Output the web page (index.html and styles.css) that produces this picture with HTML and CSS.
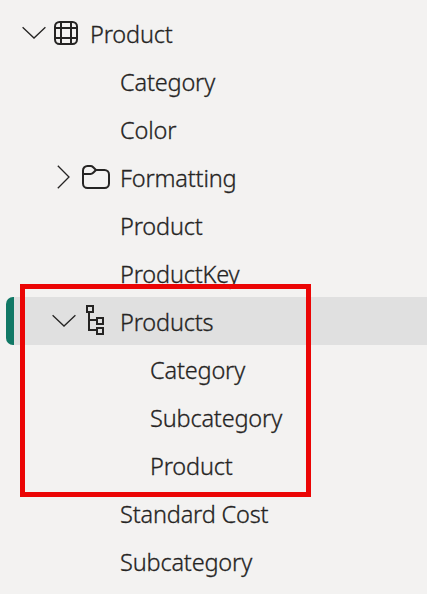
FILE: index.html
```
<!DOCTYPE html>
<html lang="en">
<head>
<meta charset="utf-8">
<title>Data</title>
<link rel="stylesheet" href="styles.css">
</head>
<body>
<main class="tree">
  <div class="row root">
    <svg class="chevron" viewBox="0 0 24 48"><path d="M.6 18.2 12 29 23.4 18.2"/></svg>
    <svg class="icon" viewBox="0 0 30 48"><rect x="3" y="13" width="22" height="22" rx="4.5"/><path d="M9 13V35M19 13V35M3 19H25M3 29H25"/></svg>
    <span class="label">Product</span>
  </div>
  <div class="row field"><span class="label">Category</span></div>
  <div class="row field"><span class="label">Color</span></div>
  <div class="row branch">
    <svg class="chevron" viewBox="0 0 24 48"><path d="M5.8 12.8 17 24 5.8 35.2"/></svg>
    <svg class="icon" viewBox="0 0 30 48"><path d="M1 17.5A4.5 4.5 0 0 1 5.500 13H8.500Q10 13 11.200 14.200L14 17H22.500A4.500 4.500 0 0 1 27 21.500V30.500A4.500 4.500 0 0 1 22.500 35H5.500A4.500 4.500 0 0 1 1 30.500ZM1 21H8.500Q10 21 11.200 19.800L14 17"/></svg>
    <span class="label">Formatting</span>
  </div>
  <div class="row field"><span class="label">Product</span></div>
  <div class="row field"><span class="label">ProductKey</span></div>
  <div class="row branch selected">
    <svg class="chevron" viewBox="0 0 24 48"><path d="M.6 18.2 12 29 23.4 18.2"/></svg>
    <svg class="icon" viewBox="0 0 30 48"><path d="M5 9H11V15H5ZM15 21H21V27H15ZM15 31H21V37H15ZM7 15V33H15M7 23H15"/></svg>
    <span class="label">Products</span>
  </div>
  <div class="row level"><span class="label">Category</span></div>
  <div class="row level"><span class="label">Subcategory</span></div>
  <div class="row level"><span class="label">Product</span></div>
  <div class="row field"><span class="label">Standard Cost</span></div>
  <div class="row field"><span class="label">Subcategory</span></div>
  <div class="callout"></div>
</main>
</body>
</html>
```
FILE: styles.css
```
body {
  margin: 0;
  background: #f3f2f1;
  color: #252423;
  font-family: "Noto Sans", "Open Sans", sans-serif;
  font-size: 23.5px;
  font-weight: 350;
  overflow: hidden;
}
.tree {
  position: relative;
  box-sizing: border-box;
  height: 594px;
  padding: 9px 0 0 6px;
}
.row {
  display: flex;
  align-items: center;
  box-sizing: border-box;
  height: 48px;
}
.root { padding-left: 16px; }
.branch { padding-left: 46px; }
.field { padding-left: 114px; }
.level { padding-left: 144px; }
.selected {
  padding-left: 38px;
  border-left: 8px solid #117865;
  border-radius: 7px 0 0 7px;
  background: #e0e0e0;
}
.chevron, .icon {
  flex: none;
  height: 48px;
  fill: none;
  stroke: #252423;
}
.chevron { width: 24px; margin-right: 6px; stroke-width: 1.3; }
.icon { width: 30px; margin-right: 8px; stroke-width: 2; }
.label {
  padding-top: 2px;
  line-height: 32px;
  letter-spacing: -.17px;
  white-space: nowrap;
  -webkit-text-stroke: .3px #252423;
}
.callout {
  position: absolute;
  left: 20px;
  top: 284px;
  box-sizing: border-box;
  width: 291px;
  height: 213px;
  border: 5px solid #eb0505;
}
```
